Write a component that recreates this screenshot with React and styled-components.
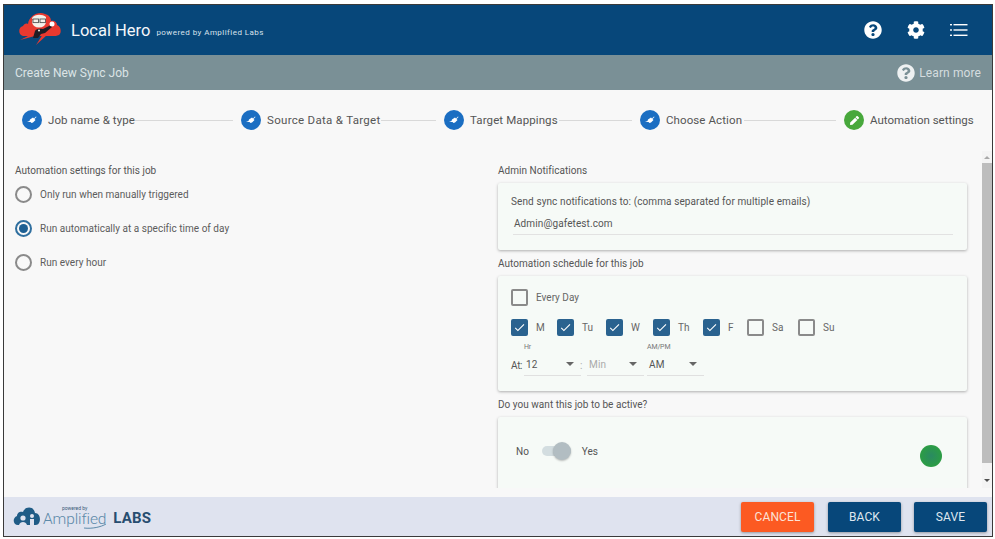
import React from 'react';
import styled, { createGlobalStyle } from 'styled-components';
import { FaQuestionCircle, FaCog, FaPen } from 'react-icons/fa';
import { MdCheck } from 'react-icons/md';

const Global = createGlobalStyle`
  html, body { margin: 0; padding: 0; background: #fff; }
  body { font-family: Roboto, "Liberation Sans", sans-serif; overflow: hidden; }
  * { box-sizing: border-box; }
`;
const Page = styled.div`
  width: 995px; height: 539px; padding: 4px 2px 2px 3px; background: #fff;
`;
const Frame = styled.div`
  width: 100%; height: 100%; border: 1px solid #3a3a3a;
  display: flex; flex-direction: column; background: #f8f8f8; overflow: hidden;
`;
const Header = styled.header`
  height: 50px; flex: none; background: #07477a; color: #fff; display: flex; align-items: center;
  padding: 0 24px 0 14px;
`;
const LogoSlot = styled.span`
  display: block; margin-top: -4px; svg { display: block; }
`;
const Title = styled.span`
  font-size: 16.5px; margin-left: 9px; color: #f4f7fa;
`;
const Powered = styled.span`
  font-size: 8px; margin: 5px 0 0 6px; color: #d7e2ec; letter-spacing: .45px;
`;
const HeaderIcons = styled.div`
  margin-left: auto; display: flex; align-items: center; gap: 25px; color: #fff;
  svg { display: block; }
`;
const SubBar = styled.div`
  height: 35px; flex: none; background: #7a9096; color: #dce4e6; display: flex; align-items: center;
  justify-content: space-between; padding: 0 11px 0 11px; font-size: 12px;
`;
const Learn = styled.span`
  display: flex; align-items: center; gap: 4px; letter-spacing: .1px; color: #d5dddf;
  svg { color: #eef1f2; }
`;
const Stepper = styled.div`
  height: 61px; flex: none; display: flex; align-items: center; padding: 0 0 1px 18px; color: #555;
`;
const Step = styled.div`
  display: flex; align-items: center; gap: 6px; font-size: 11.5px; white-space: nowrap; flex: none;
  letter-spacing: ${p => p.$ls}px;
  width: ${p => (p.$w ? `${p.$w}px` : 'auto')};
`;
const StepDot = styled.span`
  width: 20px; height: 20px; border-radius: 50%; display: flex; align-items: center; justify-content: center; flex: none;
  color: #fff; font-size: 9px; background: ${p => (p.$active ? '#48a83c' : '#1b6ec2')};
`;
const Connector = styled.div`
  flex: none; width: ${p => p.$w}px; height: 1px; background: #d9d9d9; margin-right: 8px;
`;
const Content = styled.div`
  height: 337px; flex: none; display: flex; position: relative; overflow: hidden;
`;
const LeftCol = styled.div`
  width: 483px; flex: none; padding: 14px 0 0 11px;
`;
const RightCol = styled.div`
  flex: 1; padding: 14px 0 0 11px; min-width: 0; overflow: hidden;
`;
const Label = styled.div`
  font-size: 10px; letter-spacing: .03px; color: #555; line-height: 12px;
`;
const RadioRow = styled.div`
  display: flex; align-items: center; gap: 8px; font-size: 10px; letter-spacing: .02px; color: #5c5c5c; height: 34px;
`;
const RadioCircle = styled.span`
  width: 17px; height: 17px; border-radius: 50%; display: flex; align-items: center; justify-content: center; flex: none;
  border: 2px solid ${p => (p.$on ? '#2f6f9f' : '#8a8a8a')};
  &::after { content: ''; width: 9px; height: 9px; border-radius: 50%; background: ${p => (p.$on ? '#1c5f93' : 'transparent')}; }
`;
const RadioGroup = styled.div`
  display: flex; flex-direction: column;
`;
const Card = styled.div`
  width: 469px; background: #f6faf7; border-radius: 2px;
  box-shadow: 0 1px 3px rgba(0,0,0,.3); margin-top: 6px;
`;
const EmailCard = styled(Card)`
  height: 67px; padding: 13px 14px 0 13px; margin-bottom: 8px;
`;
const CardText = styled.div`
  font-size: 10px; letter-spacing: .1px; color: #555; line-height: 12px;
`;
const EmailValue = styled.div`
  margin: 10px 0 0 2px; padding-left: 1px; font-size: 10px; letter-spacing: .1px; color: #555; height: 17px; line-height: 12px;
  border-bottom: 1px solid #e2e2e2;
`;
const ScheduleCard = styled(Card)`
  height: 115px; padding: 13px 13px 0 13px; margin-bottom: 8px;
`;
const CheckRow = styled.div`
  display: flex; align-items: center; height: 17px;
`;
const Day = styled.div`
  display: flex; align-items: center; gap: 8px; font-size: 10px; color: #666; flex: none; width: ${p => p.$w}px;
`;
const Box = styled.span`
  width: 17px; height: 17px; border-radius: 2px; flex: none; display: flex; align-items: center; justify-content: center;
  color: #fff; background: ${p => (p.$on ? '#2a628f' : 'transparent')};
  border: 2px solid ${p => (p.$on ? '#2a628f' : '#8a8a8a')};
`;
const Days = styled(CheckRow)`
  margin-top: 13px;
`;
const TimeRow = styled.div`
  display: flex; align-items: flex-end; margin-top: 7px; font-size: 10px; color: #555;
`;
const Micro = styled.span`
  display: block; font-size: 7px; color: #777; line-height: 8px; height: 8px; margin-bottom: 6px; letter-spacing: -.15px;
`;
const At = styled.span`
  width: 13px; flex: none; padding-bottom: 3px; margin-bottom: 1px; letter-spacing: -.3px; line-height: 12px;
`;
const Sep = styled.span`
  width: 6px; flex: none; margin-left: -1px; margin-right: 1px; color: #aaa; padding-bottom: 3px; line-height: 12px; margin-bottom: 1px;
`;
const SelectCol = styled.div`
  width: 57px; flex: none; margin-right: ${p => p.$mr || 0}px;
`;
const Select = styled.div`
  height: 19px; border-bottom: 1px solid #e0e0e0; display: flex; align-items: flex-start; justify-content: space-between;
  padding: 2px 7px 0 2px; line-height: 12px; color: ${p => (p.$muted ? '#aaa' : '#555')}; letter-spacing: .2px;
  &::after { content: ''; margin-top: 3px; border-left: 4px solid transparent; border-right: 4px solid transparent; border-top: 4px solid #666; }
`;
const ActiveCard = styled(Card)`
  height: 90px; padding: 25px 25px 0 18px; display: flex; align-items: flex-start; font-size: 10px; color: #555;
`;
const SwitchRow = styled.div`
  display: flex; align-items: center; gap: 13px; height: 18px;
`;
const Track = styled.span`
  width: 29px; height: 10px; border-radius: 5px; background: #d3dde0; position: relative; display: block;
  margin-right: -2px;
  &::after {
    content: ''; position: absolute; right: 0; top: -4px; width: 18px; height: 18px; border-radius: 50%;
    background: #b2bdc2; box-shadow: 0 1px 2px rgba(0,0,0,.25);
  }
`;
const Lamp = styled.span`
  width: 22px; height: 22px; border-radius: 50%; margin: 3px 0 0 auto;
  background: radial-gradient(circle, #2a8a62 0%, #2b9a48 60%, #35a83f 100%);
`;
const Scrollbar = styled.div`
  position: absolute; right: 0; top: 0; bottom: 0; width: 10px; background: #f4f4f4; display: flex; flex-direction: column;
  align-items: center;
`;
const Arrow = styled.span`
  height: ${p => p.$h}px; flex: none; display: flex; align-items: center; justify-content: center;
  &::after { content: ''; border-left: 3px solid transparent; border-right: 3px solid transparent;
    ${p => (p.$up ? 'border-bottom: 3px solid #a9a9a9;' : 'border-top: 3px solid #505050;')} }
`;
const Thumb = styled.div`
  width: 100%; height: 300px; background: #bdbdbd; flex: none;
`;
const Spacer = styled.div`flex: 1;`;
const Band = styled.div`flex: 1; min-height: 0; background: #f8f8f8;`;
const Footer = styled.footer`
  height: 39px; flex: none; background: #dfe3ef; display: flex; align-items: center; padding: 0 5px 0 9px;
`;
const Brand = styled.div`
  display: flex; align-items: center; margin-right: auto; margin-top: -2px;
`;
const BrandName = styled.div`
  position: relative; display: flex; flex-direction: column; align-items: center; margin-left: 3px; color: #5d8aa9; font-size: 15.5px;
  small { font-size: 5px; line-height: 6px; color: #3a5a78; }
  span { font-weight: 300; letter-spacing: -.1px; line-height: 16px; }
  svg { position: absolute; right: 0; bottom: -2px; }
`;
const Labs = styled.span`
  font-size: 15px; font-weight: 700; color: #274d70; margin-left: 7px; margin-top: 5px; letter-spacing: .2px;
`;
const Btn = styled.button`
  width: 73px; height: 30px; border: 0; border-radius: 2px; margin-left: ${p => p.$ml}px; font-family: inherit; font-size: 12px; letter-spacing: .1px;
  color: ${p => (p.$danger ? '#fbe3d8' : '#dfe7ef')}; background: ${p => (p.$danger ? '#fc5a22' : '#07477a')}; box-shadow: 0 1px 3px rgba(0,0,0,.35);
`;

const Logo = () => (
  <svg width="44" height="34" viewBox="0 0 44 34">
    <path d="M5 25 C0 24 0 16 5 15 C6 13 8 12 10 13 C11 5 20 0 27 3 C31 4 33 7 33 10 C36 9 39 11 39 14 C43 15 44 22 41 24 C39 25 37 25 33 25 L8 25 Z" fill="#e8392f" />
    <path d="M2 29 L14 23 L17 25 Z M18 34 L25 23 L29 24 Z" fill="#e8392f" />
    <ellipse cx="21" cy="11" rx="7" ry="5.5" fill="#f4f0ea" />
    <path d="M14 7 C17 3 24 3 28 6 L28 8 L14 8 Z" fill="#f4f0ea" />
    <rect x="15" y="8" width="5.5" height="3.6" fill="none" stroke="#555" strokeWidth=".9" />
    <rect x="22" y="8" width="5.5" height="3.6" fill="none" stroke="#555" strokeWidth=".9" />
    <path d="M15 27 L17 20 C19 17 23 18 25 18 L33 14 L34 16 L27 22 L23 23 L20 27 Z" fill="#1d1d25" />
    <circle cx="21" cy="19.5" r="1" fill="#f4f0ea" />
    <circle cx="34" cy="13" r="2.5" fill="#fff" />
  </svg>
);

const CloudLogo = () => (
  <svg width="27" height="21" viewBox="0 0 27 21">
    <path d="M5 20 C0 20 -1 13 4 11 C4 7 8 6 10 7 C12 1 21 1 22 8 C27 8 28 15 26 18 C25 20 23 20 21 20 Z" fill="#1f5c86" />
    <circle cx="10" cy="13" r="2.6" fill="#dfe3ef" />
    <circle cx="19" cy="11" r="2" fill="#dfe3ef" />
    <path d="M6 20 C7 16 13 16 14 20 Z M17 20 v-6 h4 v6 Z" fill="#dfe3ef" />
  </svg>
);

const Swoosh = () => (
  <svg width="22" height="5" viewBox="0 0 22 5">
    <path d="M0 4 C8 5 17 3 22 0" fill="none" stroke="#5d8aa9" strokeWidth="1" />
  </svg>
);

const PlugIcon = () => (
  <svg width="12" height="12" viewBox="0 0 12 12">
    <path d="M1 8 L3.5 7 L4 5.5 L7 3.5 L8 4.5 L10 2.5 L10.5 3 L8.5 5 L9.5 6 L7 8.5 L5.5 9 L4.5 8 Z" fill="#fff" />
  </svg>
);

const ListIcon = () => (
  <svg width="18" height="14" viewBox="0 0 18 14" fill="#fff">
    <rect x="0" y="1" width="2" height="1.4" />
    <rect x="3.5" y="1" width="14" height="1.4" />
    <rect x="0" y="6.3" width="2" height="1.4" />
    <rect x="3.5" y="6.3" width="14" height="1.4" />
    <rect x="0" y="11.6" width="2" height="1.4" />
    <rect x="3.5" y="11.6" width="14" height="1.4" />
  </svg>
);

const steps = [
  ['Job name & type', 113, 98, .09],
  ['Source Data & Target', 140, 55, .3],
  ['Target Mappings', 115, 73, .1],
  ['Choose Action', 104, 92, .1],
];
const days = [['M', 1, 46], ['Tu', 1, 49], ['W', 1, 47], ['Th', 1, 50], ['F', 1, 44], ['Sa', 0, 51], ['Su', 0, 50]];

export default function App() {
  return (
    <Page>
      <Global />
      <Frame>
        <Header>
          <LogoSlot><Logo /></LogoSlot>
          <Title>Local Hero</Title>
          <Powered>powered by Amplified Labs</Powered>
          <HeaderIcons>
            <FaQuestionCircle size={18} />
            <FaCog size={18} />
            <ListIcon />
          </HeaderIcons>
        </Header>
        <SubBar>
          <span>Create New Sync Job</span>
          <Learn><FaQuestionCircle size={18} />Learn more</Learn>
        </SubBar>
        <Stepper>
          {steps.map(([s, w, c, ls]) => (
            <React.Fragment key={s}>
              <Step $w={w} $ls={ls}><StepDot><PlugIcon /></StepDot>{s}</Step>
              <Connector $w={c} />
            </React.Fragment>
          ))}
          <Step $ls={0}><StepDot $active><FaPen /></StepDot>Automation settings</Step>
        </Stepper>
        <Content>
          <LeftCol>
            <Label>Automation settings for this job</Label>
            <RadioGroup>
              <RadioRow><RadioCircle />Only run when manually triggered</RadioRow>
              <RadioRow><RadioCircle $on />Run automatically at a specific time of day</RadioRow>
              <RadioRow><RadioCircle />Run every hour</RadioRow>
            </RadioGroup>
          </LeftCol>
          <RightCol>
            <Label>Admin Notifications</Label>
            <EmailCard>
              <CardText>Send sync notifications to: (comma separated for multiple emails)</CardText>
              <EmailValue>Admin@gafetest.com</EmailValue>
            </EmailCard>
            <Label>Automation schedule for this job</Label>
            <ScheduleCard>
              <CheckRow><Day $w={90}><Box />Every Day</Day></CheckRow>
              <Days>
                {days.map(([d, on, w]) => (
                  <Day key={d} $w={w}>
                    <Box $on={!!on}>{on ? <MdCheck size={15} /> : null}</Box>{d}
                  </Day>
                ))}
              </Days>
              <TimeRow>
                <At>At:</At>
                <SelectCol><Micro>Hr</Micro><Select>12</Select></SelectCol>
                <Sep>:</Sep>
                <SelectCol $mr={3}><Select $muted>Min</Select></SelectCol>
                <SelectCol><Micro>AM/PM</Micro><Select>AM</Select></SelectCol>
              </TimeRow>
            </ScheduleCard>
            <Label>Do you want this job to be active?</Label>
            <ActiveCard>
              <SwitchRow>No<Track />Yes</SwitchRow>
              <Lamp />
            </ActiveCard>
          </RightCol>
          <Scrollbar>
            <Arrow $up $h={12} />
            <Thumb />
            <Spacer />
            <Arrow $h={16} />
          </Scrollbar>
        </Content>
        <Band />
        <Footer>
          <Brand>
            <CloudLogo />
            <BrandName><small>powered by</small><span>Amplified</span><Swoosh /></BrandName>
            <Labs>LABS</Labs>
          </Brand>
          <Btn $danger $ml={0}>CANCEL</Btn>
          <Btn $ml={14}>BACK</Btn>
          <Btn $ml={13}>SAVE</Btn>
        </Footer>
      </Frame>
    </Page>
  );
}
